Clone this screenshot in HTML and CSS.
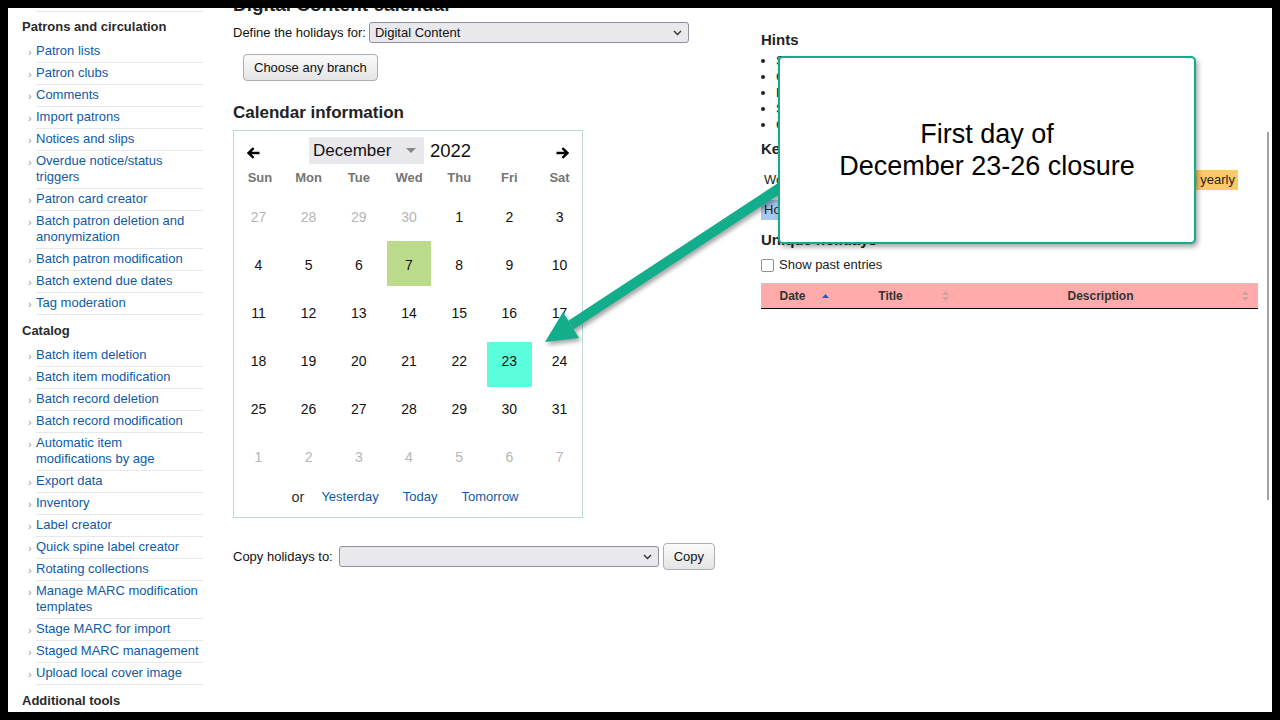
FILE: index.html
```html
<!DOCTYPE html>
<html lang="en">
<head>
<meta charset="utf-8">
<title>Digital Content calendar</title>
<link rel="stylesheet" href="styles.css">
</head>
<body>
<div class="screen">
  <div class="page">
    <aside class="sidebar">
      <ul class="navlist">
        <li><a href="#">Tools home</a></li>
      </ul>
      <h5 class="nav-head">Patrons and circulation</h5>
      <ul class="navlist">
        <li><a href="#">Patron lists</a></li>
        <li><a href="#">Patron clubs</a></li>
        <li><a href="#">Comments</a></li>
        <li><a href="#">Import patrons</a></li>
        <li><a href="#">Notices and slips</a></li>
        <li><a href="#">Overdue notice/status triggers</a></li>
        <li><a href="#">Patron card creator</a></li>
        <li><a href="#">Batch patron deletion and anonymization</a></li>
        <li><a href="#">Batch patron modification</a></li>
        <li><a href="#">Batch extend due dates</a></li>
        <li><a href="#">Tag moderation</a></li>
      </ul>
      <h5 class="nav-head">Catalog</h5>
      <ul class="navlist">
        <li><a href="#">Batch item deletion</a></li>
        <li><a href="#">Batch item modification</a></li>
        <li><a href="#">Batch record deletion</a></li>
        <li><a href="#">Batch record modification</a></li>
        <li><a href="#">Automatic item modifications by age</a></li>
        <li><a href="#">Export data</a></li>
        <li><a href="#">Inventory</a></li>
        <li><a href="#">Label creator</a></li>
        <li><a href="#">Quick spine label creator</a></li>
        <li><a href="#">Rotating collections</a></li>
        <li><a href="#">Manage MARC modification templates</a></li>
        <li><a href="#">Stage MARC for import</a></li>
        <li><a href="#">Staged MARC management</a></li>
        <li><a href="#">Upload local cover image</a></li>
      </ul>
      <h5 class="nav-head">Additional tools</h5>
      <ul class="navlist">
        <li><a href="#">Calendar</a></li>
      </ul>
    </aside>

    <main class="main">
      <h1 class="page-title">Digital Content calendar</h1>
      <div class="field-row">
        <label class="field-label">Define the holidays for:</label>
        <div class="select branch-select">
          <span>Digital Content</span>
          <svg class="chev" width="9" height="6" viewBox="0 0 9 6"><polyline points="1,1 4.5,4.5 8,1" fill="none" stroke="#333" stroke-width="1.4"/></svg>
        </div>
      </div>
      <button class="btn branch-btn" type="button">Choose any branch</button>

      <h3 class="section-title">Calendar information</h3>
      <div class="calendar">
        <div class="cal-header">
          <span class="nav-arrow">
            <svg width="13" height="12" viewBox="0 0 13 12"><path d="M12.5 6H2.2M6.6 1.2 1.6 6l5 4.8" fill="none" stroke="#000" stroke-width="2.4" stroke-linejoin="miter"/></svg>
          </span>
          <div class="month-select">
            <span>December</span>
            <svg class="caret" width="10" height="5" viewBox="0 0 10 5"><path d="M0 0h10L5 5z" fill="#888"/></svg>
          </div>
          <span class="year">2022</span>
          <span class="nav-arrow next">
            <svg width="13" height="12" viewBox="0 0 13 12"><path d="M0.5 6h10.3M6.4 1.2l5 4.8-5 4.8" fill="none" stroke="#000" stroke-width="2.4" stroke-linejoin="miter"/></svg>
          </span>
        </div>
        <div class="weekdays">
          <span>Sun</span><span>Mon</span><span>Tue</span><span>Wed</span><span>Thu</span><span>Fri</span><span>Sat</span>
        </div>
        <div class="days">
          <span class="day other">27</span><span class="day other">28</span><span class="day other">29</span><span class="day other">30</span><span class="day">1</span><span class="day">2</span><span class="day">3</span>
          <span class="day">4</span><span class="day">5</span><span class="day">6</span><span class="day today">7</span><span class="day">8</span><span class="day">9</span><span class="day">10</span>
          <span class="day">11</span><span class="day">12</span><span class="day">13</span><span class="day">14</span><span class="day">15</span><span class="day">16</span><span class="day">17</span>
          <span class="day">18</span><span class="day">19</span><span class="day">20</span><span class="day">21</span><span class="day">22</span><span class="day selected">23</span><span class="day">24</span>
          <span class="day">25</span><span class="day">26</span><span class="day">27</span><span class="day">28</span><span class="day">29</span><span class="day">30</span><span class="day">31</span>
          <span class="day other">1</span><span class="day other">2</span><span class="day other">3</span><span class="day other">4</span><span class="day other">5</span><span class="day other">6</span><span class="day other">7</span>
        </div>
        <div class="shortcuts">
          <span class="or">or</span>
          <a href="#">Yesterday</a>
          <a href="#">Today</a>
          <a href="#">Tomorrow</a>
        </div>
      </div>

      <div class="field-row copy-row">
        <label class="field-label">Copy holidays to:</label>
        <div class="select copy-select">
          <span></span>
          <svg class="chev" width="9" height="6" viewBox="0 0 9 6"><polyline points="1,1 4.5,4.5 8,1" fill="none" stroke="#333" stroke-width="1.4"/></svg>
        </div>
        <button class="btn copy-btn" type="button">Copy</button>
      </div>
    </main>

    <section class="info">
      <h3 class="info-title">Hints</h3>
      <ul class="hints">
        <li>Search in the calendar the day you want to set as holiday.</li>
        <li>Click the date to add or edit a holiday.</li>
        <li>Enter a title and description for the holiday.</li>
        <li>Specify how the holiday should repeat.</li>
        <li>Click Save to finish.</li>
      </ul>
      <h3 class="info-title key-title">Key</h3>
      <div class="key-row">
        <span class="key working">Working day</span>
        <span class="key unique">Unique holiday</span>
        <span class="key weekly">Holiday repeating weekly</span>
        <span class="key yearly">Holiday repeating yearly</span>
      </div>
      <div class="key-row second">
        <span class="key exception">Holiday exception</span>
      </div>
      <h3 class="info-title unique-title">Unique holidays</h3>
      <label class="check-row"><input type="checkbox" class="check"> Show past entries</label>
      <table class="holidays">
        <thead>
          <tr>
            <th class="col-date">Date
              <svg class="sort" width="7" height="12" viewBox="0 0 7 12"><path d="M0 8h7L3.5 4z" fill="#1565c8"/></svg>
            </th>
            <th class="col-title">Title
              <svg class="sort" width="7" height="12" viewBox="0 0 7 12"><path d="M0 5h7L3.5 1zM0 7h7L3.5 11z" fill="#c9a4a4"/></svg>
            </th>
            <th class="col-desc">Description
              <svg class="sort" width="7" height="12" viewBox="0 0 7 12"><path d="M0 5h7L3.5 1zM0 7h7L3.5 11z" fill="#c9a4a4"/></svg>
            </th>
          </tr>
        </thead>
      </table>
    </section>
  </div>

  <svg class="arrow" width="1264" height="704" viewBox="0 0 1264 704">
    <g class="arrow-shape">
      <line x1="563" y1="317" x2="790" y2="168" stroke="#12ad8b" stroke-width="10"/>
      <polygon points="537,334 571,330 555,304" fill="#12ad8b"/>
    </g>
  </svg>

  <div class="callout">First day of<br>December 23-26 closure</div>
  <div class="scrollbar"></div>
</div>
</body>
</html>
```

FILE: styles.css
```css
html, body {
  margin: 0;
  padding: 0;
  background: #000;
}

body {
  padding: 8px;
  font-family: "Liberation Sans", Arial, sans-serif;
  font-size: 13px;
  color: #222;
}

.screen {
  position: relative;
  width: 1264px;
  height: 704px;
  overflow: hidden;
  background: #fff;
}

.page {
  display: flex;
  align-items: flex-start;
  margin-top: -19px;
  padding-left: 14px;
}

a {
  color: #0d5aa7;
  text-decoration: none;
}

/* Sidebar */
.sidebar {
  width: 181px;
  flex: none;
  padding-top: 1px;
}

.nav-head {
  margin: 8px 0 6px;
  font-size: 13px;
  line-height: 16px;
  font-weight: bold;
  color: #2b2b2b;
}

.sidebar > .navlist:first-child + .nav-head {
  margin-top: 7px;
}

.navlist {
  list-style: none;
  margin: 0;
  padding: 0 0 0 14px;
}

.navlist li {
  padding: 2px 4px 3px 0;
  line-height: 16px;
  border-bottom: 1px solid #e8e8e8;
}

.navlist li::before {
  content: "›";
  float: left;
  width: 8px;
  margin: 1px 0 0 -8px;
  font-size: 11px;
  line-height: 16px;
  color: #9a9a9a;
}

/* Main column */
.main {
  width: 483px;
  flex: none;
  margin-left: 30px;
  padding-top: 5px;
}

.page-title {
  margin: 0;
  font-size: 19px;
  line-height: 22px;
  font-weight: bold;
  color: #222;
}

.field-row {
  display: flex;
  align-items: center;
  margin-top: 6px;
  height: 21px;
}

.field-label {
  flex: none;
  white-space: nowrap;
  color: #111;
  line-height: 21px;
}

.select {
  display: flex;
  flex: none;
  align-items: center;
  justify-content: space-between;
  box-sizing: border-box;
  width: 320px;
  height: 21px;
  padding: 0 6px 0 5px;
  border: 1px solid #8f8f9d;
  border-radius: 3px;
  background: #e9e9ed;
  color: #111;
}

.branch-select {
  margin-left: 3px;
}

.btn {
  flex: none;
  box-sizing: border-box;
  height: 27px;
  padding: 0 10px;
  border: 1px solid #adadad;
  border-radius: 4px;
  background: linear-gradient(#fbfbfb, #e4e4e4);
  font-family: inherit;
  font-size: 13px;
  color: #111;
}

.branch-btn {
  display: block;
  margin: 11px 0 0 10px;
}

.section-title {
  margin: 22px 0 0;
  font-size: 17px;
  line-height: 20px;
  font-weight: bold;
  color: #222;
}

/* Calendar */
.calendar {
  box-sizing: border-box;
  width: 350px;
  margin-top: 7px;
  padding: 6px 0 10px;
  border: 1px solid #bcdcd8;
}

.cal-header {
  display: flex;
  align-items: flex-start;
  height: 27px;
  padding: 0 13px;
}

.nav-arrow {
  display: block;
  width: 13px;
  height: 12px;
  margin-top: 10px;
}

.nav-arrow svg {
  display: block;
}

.nav-arrow.next {
  margin-left: auto;
}

.month-select {
  display: flex;
  align-items: center;
  box-sizing: border-box;
  width: 115px;
  height: 27px;
  margin-left: 49px;
  padding: 0 8px 0 4px;
  background: #e8e8ec;
  font-size: 17px;
  color: #111;
}

.month-select .caret {
  margin-left: auto;
}

.year {
  margin-left: 6px;
  font-size: 18.5px;
  line-height: 27px;
  color: #111;
}

.weekdays,
.days {
  display: grid;
  grid-template-columns: repeat(7, 1fr);
  column-gap: 5.3px;
  padding-left: 2px;
  text-align: center;
}

.weekdays {
  margin-top: 4px;
  line-height: 20px;
  font-weight: bold;
  color: #757575;
}

.weekdays span:first-child {
  padding-left: 3px;
}

.days {
  margin-top: 7px;
  grid-auto-rows: 45px;
  row-gap: 3px;
  font-size: 14px;
}

.day {
  line-height: 45px;
  color: #111;
}

.day.other {
  color: #b5b5b5;
}

.day.today {
  margin-top: -2px;
  height: 45px;
  line-height: 49px;
  background: #bcdb8a;
}

.day.selected {
  margin-top: 3px;
  height: 45px;
  line-height: 38px;
  background: #5bfedc;
}

.shortcuts {
  display: flex;
  justify-content: center;
  gap: 24px;
  margin-top: 7px;
  padding-right: 6px;
  line-height: 20px;
}

.shortcuts .or {
  margin-right: -7px;
  font-size: 14.5px;
  color: #333;
}

.copy-row {
  margin-top: 25px;
  height: 27px;
}

.copy-select {
  margin-left: 6px;
}

.copy-btn {
  margin-left: 4px;
}

/* Right column */
.info {
  width: 497px;
  flex: none;
  margin-left: 45px;
  padding-top: 41px;
}

.info-title {
  margin: 0;
  font-size: 15px;
  line-height: 20px;
  font-weight: bold;
  color: #222;
}

.hints {
  margin: 3px 0 0;
  padding-left: 15px;
  line-height: 16px;
  white-space: nowrap;
}

.key-title {
  margin-top: 6px;
}

.key-row {
  margin-top: 11px;
  line-height: 20px;
  white-space: nowrap;
}

.key-row.second {
  margin-top: 10px;
}

.key {
  display: inline-block;
  padding: 0 3px;
}

.key.working { background: #fff; }
.key.unique { background: #ffaaaa; }
.key.weekly { background: #bcdb8a; }
.key.yearly { background: #ffc966; }
.key.exception { background: #a8c8f0; }

.unique-title {
  margin-top: 10px;
}

.check-row {
  display: flex;
  align-items: center;
  margin-top: 7px;
  line-height: 16px;
}

.check {
  appearance: none;
  box-sizing: border-box;
  width: 13px;
  height: 13px;
  margin: 0 5px 0 0;
  border: 1px solid #8f8f9d;
  border-radius: 2px;
  background: #fff;
}

.holidays {
  width: 497px;
  margin-top: 10px;
  border-collapse: collapse;
}

.holidays th {
  position: relative;
  height: 25px;
  padding: 0 24px 0 10px;
  box-sizing: border-box;
  background: #ffabab;
  border-top: 1px solid #c8c8c8;
  border-left: 1px solid #c4c4c4;
  border-right: 1px solid #c4c4c4;
  border-bottom: 1px solid #000;
  font-size: 12px;
  font-weight: bold;
  color: #333;
  text-align: center;
}

.holidays .col-date { width: 76px; }
.holidays .col-title { width: 120px; }

.sort {
  position: absolute;
  right: 8px;
  top: 6px;
}

/* Annotation overlay */
.arrow {
  position: absolute;
  left: 0;
  top: 0;
  pointer-events: none;
}

.arrow-shape {
  filter: drop-shadow(2px 3px 2px rgba(0, 0, 0, 0.35));
}

.callout {
  position: absolute;
  left: 770px;
  top: 48px;
  box-sizing: border-box;
  width: 418px;
  height: 188px;
  display: flex;
  align-items: center;
  justify-content: center;
  border: 2px solid #14ab8b;
  border-radius: 5px;
  background: #fff;
  box-shadow: 2px 3px 5px rgba(0, 0, 0, 0.35);
  font-size: 27px;
  line-height: 32px;
  text-align: center;
  color: #000;
}

.scrollbar {
  position: absolute;
  left: 1259px;
  top: 124px;
  width: 2px;
  height: 368px;
  background: #a3a3a3;
}
```
